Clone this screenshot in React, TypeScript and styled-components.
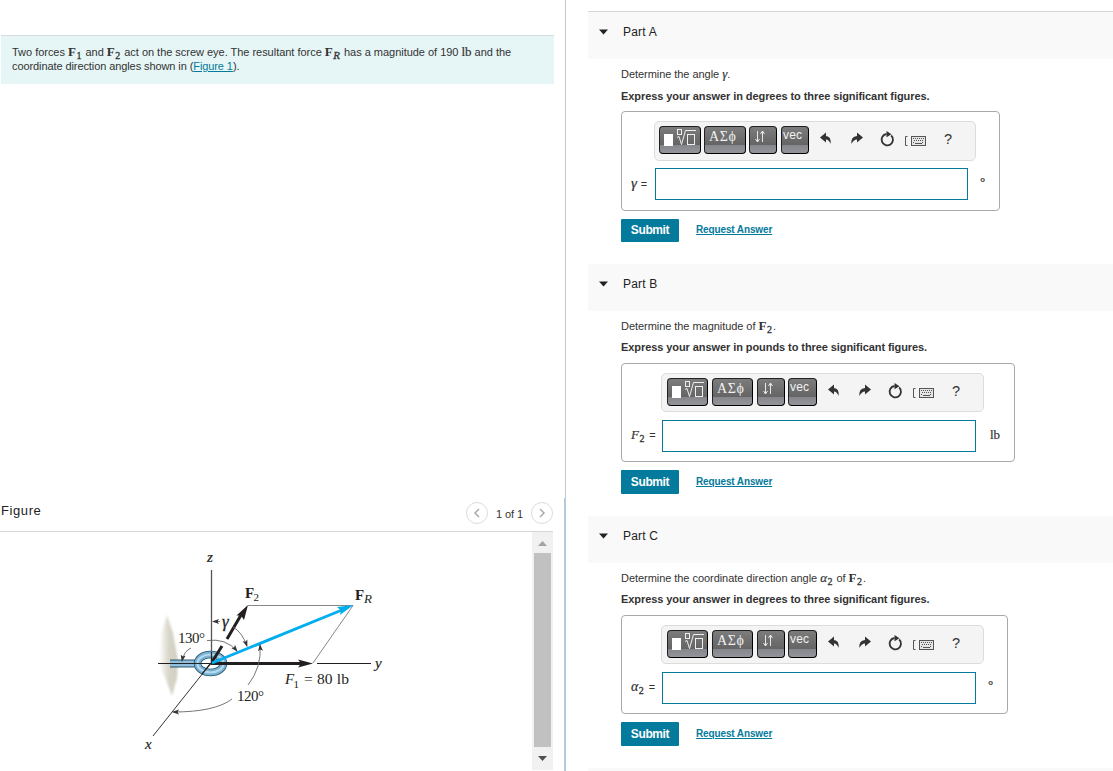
import React from 'react';
import styled, { createGlobalStyle } from 'styled-components';

const GlobalStyle = createGlobalStyle`
  *, *::before, *::after {
    box-sizing: border-box;
  }
  body {
    margin: 0;
    overflow: hidden;
    background: #fff;
    color: #333;
    font-family: 'Liberation Sans', Arial, sans-serif;
    font-size: 11px;
  }
`;

const Page = styled.div`
  display: flex;
  width: 1113px;
  height: 771px;
  overflow: hidden;
`;

const LeftPane = styled.section`
  display: flex;
  flex-direction: column;
  flex: 0 0 566px;
`;

const PromptArea = styled.div`
  height: 498px;
  padding: 35px 11px 0 1px;
  border-right: 1px solid #bfc7d1;
`;

const Prompt = styled.div`
  height: 49px;
  padding: 9px 11px 0;
  border-top: 1px solid #d5dddf;
  background: #e6f6f6;
  line-height: 14px;
  white-space: nowrap;
`;

const Line = styled.div<{ $spacing?: number }>`
  height: 14px;
  letter-spacing: ${({ $spacing = 0 }) => $spacing}px;
`;

const FigureLink = styled.a`
  color: #047a9c;
  text-decoration: underline;
`;

const MathText = styled.span<{ $bold?: boolean; $italic?: boolean; $size?: number }>`
  font-family: 'Liberation Serif', 'Times New Roman', serif;
  font-size: ${({ $size = 13 }) => $size}px;
  font-weight: ${({ $bold }) => ($bold ? 700 : 400)};
  font-style: ${({ $italic }) => ($italic ? 'italic' : 'normal')};
  line-height: 1;
  letter-spacing: 0;
  -webkit-text-stroke: ${({ $bold }) => ($bold ? 0 : 0.2)}px currentColor;
`;

const Sub = styled.span<{ $italic?: boolean }>`
  position: relative;
  top: 3px;
  margin: 0 1px 0 0.5px;
  font-family: 'Liberation Serif', 'Times New Roman', serif;
  font-size: ${({ $italic }) => ($italic ? 11 : 10)}px;
  font-style: ${({ $italic }) => ($italic ? 'italic' : 'normal')};
  line-height: 1;
  letter-spacing: 0;
  -webkit-text-stroke: 0.3px currentColor;
`;

const FigurePanel = styled.div`
  display: flex;
  flex-direction: column;
  height: 273px;
  padding-right: 11px;
  border-right: 2px solid #b5cadc;
`;

const FigureHeader = styled.div`
  display: flex;
  align-items: center;
  justify-content: space-between;
  height: 34px;
  padding: 0 0 3px 1px;
  border-bottom: 1px solid #d6d6d6;
`;

const FigureTitle = styled.h2`
  margin: 0 0 6px;
  font-size: 13px;
  font-weight: 400;
  color: #222;
  letter-spacing: 0.6px;
`;

const Pager = styled.div`
  display: flex;
  align-items: center;
  gap: 8px;
  color: #333;
  letter-spacing: -0.1px;
`;

const PagerButton = styled.button`
  display: flex;
  align-items: center;
  justify-content: center;
  width: 22px;
  height: 22px;
  padding: 0;
  border: 1px solid #dcdcdc;
  border-radius: 50%;
  background: #fff;
`;

const PageCount = styled.span`
  padding-top: 2px;
`;

const FigureBody = styled.div`
  display: flex;
  flex: 1;
`;

const Scrollbar = styled.div`
  display: flex;
  flex-direction: column;
  align-items: center;
  width: 21px;
  height: 238px;
  background: #f1f1f1;
`;

const ScrollArrow = styled.svg`
  display: block;
  width: 21px;
  height: 21px;
`;

const ScrollThumb = styled.div`
  width: 17px;
  height: 194px;
  background: #c1c1c1;
`;

const RightPane = styled.main`
  flex: 1;
  min-width: 0;
  padding: 11px 0 0 22px;
`;

const PartSection = styled.section`
  height: 252px;
`;

const PartHeader = styled.header<{ $ruled?: boolean }>`
  display: flex;
  align-items: center;
  gap: 15px;
  height: 48px;
  padding: 0 0 7px 11px;
  border-top: 1px solid ${({ $ruled }) => ($ruled ? '#d6d6d6' : '#fff')};
  background: #f9f9f9;
  color: #222;
  font-size: 12px;
  letter-spacing: 0.2px;
`;

const PartBody = styled.div`
  padding: 8px 0 0 33px;
`;

const Question = styled.p<{ $spacing: number }>`
  height: 14px;
  margin: 0;
  line-height: 14px;
  white-space: nowrap;
  letter-spacing: ${({ $spacing }) => $spacing}px;
`;

const Instruction = styled.p<{ $gap: number }>`
  height: 14px;
  margin: ${({ $gap }) => `${$gap}px 0 ${16 - $gap}px`};
  line-height: 14px;
  font-weight: 700;
  white-space: nowrap;
  letter-spacing: -0.075px;
`;

const AnswerBox = styled.div<{ $width: number; $height: number }>`
  display: grid;
  grid-template-columns: auto 1fr;
  width: ${({ $width }) => $width}px;
  height: ${({ $height }) => $height}px;
  border: 1px solid #a9a9a9;
  border-radius: 4px;
`;

const AnswerLabel = styled.div<{ $width: number }>`
  width: ${({ $width }) => $width}px;
  padding: 64px 0 0 9px;
  white-space: nowrap;
  word-spacing: 0.8px;
`;

const AnswerMain = styled.div`
  padding-top: 9px;
`;

const Toolbar = styled.div<{ $wide: boolean }>`
  display: flex;
  align-items: flex-start;
  width: ${({ $wide }) => ($wide ? 322 : 323)}px;
  height: ${({ $wide }) => ($wide ? 40 : 39)}px;
  padding: 4px 0 0 ${({ $wide }) => ($wide ? 4 : 5)}px;
  border: 1px solid #dcdcdc;
  border-radius: 5px;
  background: #f4f4f4;
`;

const ToolButton = styled.button<{ $width: number; $gap?: number; $inset?: number }>`
  display: flex;
  flex: none;
  justify-content: flex-start;
  width: ${({ $width }) => $width}px;
  height: 28px;
  margin: 0 ${({ $gap = 3 }) => $gap}px 0 0;
  padding: 0 0 0 ${({ $inset = 3 }) => $inset}px;
  border: 1px solid #222;
  border-right-color: #000;
  border-bottom-color: #000;
  border-radius: 4px;
  background: linear-gradient(#7c7c7c 0, #646464 18px, #85858c 18px, #94949b 100%);
  color: #f2f2f2;
  font-family: 'Liberation Sans', Arial, sans-serif;
  font-size: 12px;
  line-height: 17px;
`;

const Vec = styled.span`
  letter-spacing: 0.2px;
`;

const Greek = styled.span`
  font-family: 'Liberation Serif', serif;
  font-size: 14px;
  line-height: 20px;
  letter-spacing: 0.6px;
`;

const ToolIcons = styled.svg<{ $shift: number }>`
  flex: none;
  width: 152px;
  height: 28px;
  margin-left: ${({ $shift }) => $shift}px;
`;

const InputRow = styled.div<{ $top: number; $gap: number }>`
  display: flex;
  align-items: flex-start;
  margin: ${({ $top }) => $top}px 0 0 1px;
  gap: ${({ $gap }) => $gap}px;
`;

const AnswerInput = styled.input<{ $width: number }>`
  display: block;
  flex: none;
  width: ${({ $width }) => $width}px;
  height: 32px;
  padding: 0 6px;
  border: 1px solid #047a9c;
  outline: none;
`;

const Unit = styled.span<{ $top: number }>`
  padding-top: ${({ $top }) => $top}px;
  font-family: 'Liberation Serif', serif;
  font-size: 13px;
  line-height: 14px;
  -webkit-text-stroke: 0.2px currentColor;
`;

const Actions = styled.div`
  display: flex;
  align-items: flex-start;
  gap: 17px;
  margin-top: 8px;
`;

const SubmitButton = styled.button<{ $height: number }>`
  width: 58px;
  height: ${({ $height }) => $height}px;
  padding: 0 0 1px;
  border: 0;
  border-radius: 1px;
  background: #047a9c;
  color: #fff;
  font-family: inherit;
  font-size: 12px;
  font-weight: 700;
  letter-spacing: -0.4px;
`;

const RequestLink = styled.a<{ $top: number }>`
  padding-top: ${({ $top }) => $top}px;
  line-height: 12px;
  color: #047a9c;
  font-size: 10px;
  font-weight: 700;
  letter-spacing: -0.13px;
  text-decoration: underline;
`;

const FigureSvg = styled.svg`
  width: 532px;
  height: 239px;

  text {
    font-family: 'Liberation Serif', 'Times New Roman', serif;
    font-size: 15px;
    fill: #231f20;
  }
`;

const NextPart = styled.div`
  height: 20px;
  margin-top: 1px;
  background: #f9f9f9;
`;

const F2: React.FC = () => (
  <>
    <MathText $bold>F</MathText>
    <Sub>2</Sub>
  </>
);

const Template: React.FC = () => (
  <svg width="34" height="22" viewBox="0 0 34 22" fill="none" stroke="#eee">
    <rect x="1" y="7" width="9" height="12" fill="#fff" stroke="none" />
    <rect x="14.5" y="2.5" width="4" height="5" />
    <path d="M14 10.500l2-1 2.500 8 4-14H33" />
    <rect x="24.500" y="7.500" width="7" height="10" />
  </svg>
);

const Arrows: React.FC = () => (
  <svg width="14" height="20" viewBox="0 0 14 20" fill="none" stroke="#e8e8e8">
    <path d="M4.500 4v11M2.500 12l2 3 2-3M9.500 15V4M7.500 7l2-3 2 3" />
  </svg>
);

const EditorToolbar: React.FC<{ wide: boolean }> = ({ wide }) => (
  <Toolbar $wide={wide}>
    <ToolButton $width={wide ? 42 : 41} $gap={wide ? 3 : 4}>
      <Template />
    </ToolButton>
    <ToolButton $width={wide ? 42 : 41} $gap={wide ? 3 : 4} $inset={4}>
      <Greek>ΑΣϕ</Greek>
    </ToolButton>
    <ToolButton $width={28} $gap={wide ? 4 : 3}>
      <Arrows />
    </ToolButton>
    <ToolButton $width={wide ? 28 : 29} $gap={0} $inset={1}>
      <Vec>vec</Vec>
    </ToolButton>
    <ToolIcons $shift={wide ? 0 : -0.5} viewBox="0 0 152 28">
      <g fill="#333">
        <path d="M11 11.500L17 6.500V10Q22.500 10.500 21.500 18Q20 13.500 17 13.500V16.500Z" />
        <path d="M54 11.500L48 6.500V10Q41.500 10.500 42.500 18Q44.500 13.500 48 13.500V16.500Z" />
        <path d="M77.500 5l5 3.200-5 3z" />
      </g>
      <path d="M82.200 9.500A5.700 5.700 0 1 1 77.500 8" fill="none" stroke="#333" strokeWidth="1.800" />
      <path d="M98.500 10.500H96.500V19.500H98.500" fill="none" stroke="#555" />
      <rect x="102.500" y="10.500" width="14" height="9" fill="#e6e6e6" stroke="#555" />
      <path d="M104 12.500h11M105 14.500h10M104 16.500h2M113 16.500h2" stroke="#555" strokeDasharray="1 1" />
      <path d="M106 17.500h7" stroke="#555" />
      <text x="135" y="18" fontSize="14.500" fill="#333" fontFamily="Liberation Sans">
        ?
      </text>
    </ToolIcons>
  </Toolbar>
);

interface PartProps {
  title: string;
  question: React.ReactNode;
  questionSpacing?: number;
  instruction: string;
  label: React.ReactNode;
  unit: string;
  boxWidth: number;
  first?: boolean;
}

const Part: React.FC<PartProps> = ({
  title,
  question,
  questionSpacing = -0.05,
  instruction,
  label,
  unit,
  boxWidth,
  first = false,
}) => (
  <PartSection>
    <PartHeader $ruled={first}>
      <svg width="9" height="6" viewBox="0 0 9 6">
        <path d="M0 .5h9L4.500 5.500z" fill="#222" />
      </svg>
      {title}
    </PartHeader>
    <PartBody>
      <Question $spacing={questionSpacing}>{question}</Question>
      <Instruction $gap={first ? 8 : 7}>{instruction}</Instruction>
      <AnswerBox $width={boxWidth} $height={first ? 100 : 99}>
        <AnswerLabel $width={first ? 32 : 39}>{label}</AnswerLabel>
        <AnswerMain>
          <EditorToolbar wide={first} />
          <InputRow $top={first ? 7 : 8} $gap={unit === 'lb' ? 14 : 12}>
            <AnswerInput $width={first ? 313 : 314} />
            <Unit $top={unit === 'lb' ? 8 : first ? 7 : 6}>{unit}</Unit>
          </InputRow>
        </AnswerMain>
      </AnswerBox>
      <Actions>
        <SubmitButton $height={first ? 23 : 24}>Submit</SubmitButton>
        <RequestLink $top={first ? 5 : 6}>Request Answer</RequestLink>
      </Actions>
    </PartBody>
  </PartSection>
);

const ForceDiagram: React.FC = () => (
  <FigureSvg viewBox="0 532 532 239">
    <defs>
      <linearGradient id="wall" x1="0" x2="1">
        <stop offset="0" stopColor="#fff" />
        <stop offset="0.5" stopColor="#d9d7ca" />
        <stop offset="1" stopColor="#d0cec0" />
      </linearGradient>
      <filter id="soft">
        <feGaussianBlur stdDeviation="1" />
      </filter>
      <marker id="tip" markerWidth="7" markerHeight="6" refX="6" refY="3" orient="auto-start-reverse" markerUnits="userSpaceOnUse">
        <path d="M0 .5L7 3L0 5.500L1.500 3z" fill="#333" />
      </marker>
    </defs>
    <path d="M167 615L173 633L178 660L177 678L172 696L166 680L159 665L161 635z" fill="url(#wall)" filter="url(#soft)" />
    <path d="M158 663.500H170M317 663.500H371" stroke="#231f20" />
    <path d="M211.500 570V662" stroke="#555" strokeWidth="1.300" />
    <path d="M211 663L153 736" stroke="#333" />
    <path d="M170 663.500H196" stroke="#24566f" strokeWidth="8" />
    <path d="M170 663.500H197" stroke="#91bfdb" strokeWidth="6" />
    <ellipse cx="210.500" cy="663.500" rx="13" ry="9" fill="none" stroke="#24566f" strokeWidth="7.500" />
    <ellipse cx="210.500" cy="663.500" rx="13" ry="9" fill="none" stroke="#79b1d3" strokeWidth="6" />
    <ellipse cx="210.500" cy="663.500" rx="13" ry="9" fill="none" stroke="#b8daed" strokeWidth="2" />
    <path d="M169 663.500H211M211.500 652V663M211 663L202 674" stroke="#222" strokeWidth="1.200" />
    <path d="M248 605.500H353L313 663" fill="none" stroke="#888" />
    <path d="M211 663.500H301" stroke="#231f20" strokeWidth="2.800" />
    <path d="M313 663.500L298 659.500L301 663.500L298 667.500z" fill="#231f20" />
    <path d="M212 662L222 646M227 639L241 615" stroke="#231f20" strokeWidth="3" />
    <path d="M248 605L236.500 615.500L241 615.500L244 620z" fill="#231f20" />
    <path d="M212 663L342 610" stroke="#00aeef" strokeWidth="2.800" />
    <path d="M353.500 605L337 607L341 610.500L340 615z" fill="#00aeef" />
    <g fill="none" stroke="#666" strokeWidth="0.900">
      <path d="M220 621.500H213" markerEnd="url(#tip)" />
      <path d="M233 627Q242 632 247 646" markerEnd="url(#tip)" />
      <path d="M207 640.500Q226 638 237 651" markerEnd="url(#tip)" />
      <path d="M191 648Q184 651 182 661" markerEnd="url(#tip)" />
      <path d="M248 685Q262 667 260 645" markerEnd="url(#tip)" />
      <path d="M232 699Q215 712 173 712" markerEnd="url(#tip)" />
    </g>
    <text x="207" y="562" fontStyle="italic" stroke="#231f20" strokeWidth="0.200">z</text>
    <text x="145" y="749" fontStyle="italic" stroke="#231f20" strokeWidth="0.200">x</text>
    <text x="375" y="668" fontStyle="italic" stroke="#231f20" strokeWidth="0.200">y</text>
    <text x="222" y="627" fontStyle="italic" stroke="#231f20" strokeWidth="0.300" style={{ fontSize: 17 }}>γ</text>
    <text x="245" y="598" fontWeight="700">F</text>
    <text x="253.500" y="601" style={{ fontSize: 11 }}>2</text>
    <text x="355" y="600" fontWeight="700">F</text>
    <text x="364" y="603" fontStyle="italic" style={{ fontSize: 13 }}>R</text>
    <text x="178" y="643" textLength="27">130°</text>
    <text x="237" y="701" textLength="27">120°</text>
    <text x="285" y="684" fontStyle="italic">F</text>
    <text x="293.500" y="688" style={{ fontSize: 11 }}>1</text>
    <text x="304" y="684" textLength="45" style={{ fontSize: 15.5 }}>= 80 lb</text>
  </FigureSvg>
);

const App: React.FC = () => (
  <>
    <GlobalStyle />
    <Page>
      <LeftPane>
        <PromptArea>
          <Prompt>
            <Line $spacing={-0.025}>
              Two forces <MathText $bold>F</MathText>
              <Sub>1</Sub> and <F2 /> act on the screw eye. The resultant force{' '}
              <MathText $bold>F</MathText>
              <Sub $italic>R</Sub> has a magnitude of 190 <MathText>lb</MathText> and the
            </Line>
            <Line $spacing={-0.09}>
              coordinate direction angles shown in (<FigureLink>Figure 1</FigureLink>).
            </Line>
          </Prompt>
        </PromptArea>
        <FigurePanel>
          <FigureHeader>
            <FigureTitle>Figure</FigureTitle>
            <Pager>
              <PagerButton aria-label="Previous">
                <svg width="8" height="10" viewBox="0 0 8 10" fill="none" stroke="#aaa" strokeWidth="1.500">
                  <path d="M6 1L2 5l4 4" />
                </svg>
              </PagerButton>
              <PageCount>1 of 1</PageCount>
              <PagerButton aria-label="Next">
                <svg width="8" height="10" viewBox="0 0 8 10" fill="none" stroke="#aaa" strokeWidth="1.500">
                  <path d="M2 1l4 4-4 4" />
                </svg>
              </PagerButton>
            </Pager>
          </FigureHeader>
          <FigureBody>
            <ForceDiagram />
            <Scrollbar>
              <ScrollArrow viewBox="0 0 21 21">
                <path d="M6 14h9l-4.500-5z" fill="#a3a3a3" />
              </ScrollArrow>
              <ScrollThumb />
              <ScrollArrow viewBox="0 0 21 21">
                <path d="M6 9h9l-4.500 5z" fill="#505050" />
              </ScrollArrow>
            </Scrollbar>
          </FigureBody>
        </FigurePanel>
      </LeftPane>
      <RightPane>
        <Part
          first
          title="Part A"
          question={<>Determine the angle <MathText $italic>γ</MathText>.</>}
          instruction="Express your answer in degrees to three significant figures."
          label={<><MathText $italic $size={15}>γ</MathText> =</>}
          unit="°"
          boxWidth={379}
        />
        <Part
          title="Part B"
          question={<>Determine the magnitude of <F2 />.</>}
          instruction="Express your answer in pounds to three significant figures."
          label={<><MathText $italic>F</MathText><Sub>2</Sub> =</>}
          unit="lb"
          boxWidth={394}
        />
        <Part
          title="Part C"
          question={<>Determine the coordinate direction angle <MathText $italic>α</MathText><Sub>2</Sub> of <F2 />.</>}
          instruction="Express your answer in degrees to three significant figures."
          label={<><MathText $italic $size={14}>α</MathText><Sub>2</Sub> =</>}
          unit="°"
          boxWidth={387}
        />
        <NextPart />
      </RightPane>
    </Page>
  </>
);

export default App;
